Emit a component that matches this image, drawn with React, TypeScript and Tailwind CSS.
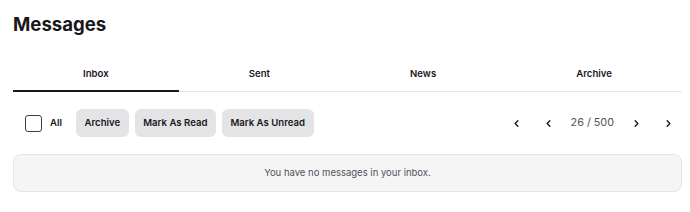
import { ChevronLeft, ChevronRight } from "lucide-react";
import { useState } from "react";

const TABS = ["Inbox", "Sent", "News", "Archive"];
const ACTIONS = ["Archive", "Mark As Read", "Mark As Unread"];

export default function App() {
  const [tab, setTab] = useState("Inbox");
  const [all, setAll] = useState(false);

  return (
    <div className="min-h-[212px] bg-white pl-[13px] pr-[8px] pt-[10px] font-['Inter',sans-serif] text-[#18181b]">
      <h1 className="text-[18.6px] font-bold leading-[28px]">Messages</h1>

      <div className="mt-[18px] flex border-b border-[#e5e7eb]">
        {TABS.map((t) => (
          <button
            key={t}
            type="button"
            onClick={() => setTab(t)}
            className={`flex-auto -mb-px pt-[10px] pb-[8px] text-[9.6px] font-semibold leading-[16px] ${
              tab === t ? "border-b-2 border-[#18181b]" : "border-b-2 border-transparent"
            }`}
          >
            {t}
          </button>
        ))}
      </div>

      <div className="mt-[17px] flex items-center">
        <label className="ml-[12px] flex items-center gap-[8px] text-[9.6px] font-semibold">
          <button
            type="button"
            onClick={() => setAll(!all)}
            className="h-[17px] w-[17px] rounded-[3px] border-[1.5px] border-[#3f3f46] bg-white"
            aria-pressed={all}
          />
          All
        </label>
        <div className="ml-[14px] flex gap-[6px]">
          {ACTIONS.map((a) => (
            <button
              key={a}
              type="button"
              className="h-[28px] rounded-[6px] bg-[#e4e4e7] px-[8.5px] text-[9.6px] font-semibold leading-[16px]"
            >
              {a}
            </button>
          ))}
        </div>
        <div className="ml-auto -mr-[2px] flex items-center">
          <button type="button" className="flex h-7 w-8 items-center justify-center">
            <ChevronLeft className="h-[11px] w-[11px]" strokeWidth={3} />
          </button>
          <button type="button" className="flex h-7 w-8 items-center justify-center">
            <ChevronLeft className="h-[11px] w-[11px]" strokeWidth={3} />
          </button>
          <span className="px-[6px] text-[10.8px] text-[#52525b]">26 / 500</span>
          <button type="button" className="flex h-7 w-8 items-center justify-center">
            <ChevronRight className="h-[11px] w-[11px]" strokeWidth={3} />
          </button>
          <button type="button" className="flex h-7 w-8 items-center justify-center">
            <ChevronRight className="h-[11px] w-[11px]" strokeWidth={3} />
          </button>
        </div>
      </div>

      <div className="mt-[17px] flex h-[38px] items-center justify-center rounded-[8px] border border-[#e5e5e5] bg-[#f5f5f5] text-[9.5px] text-[#52525b]">
        You have no messages in your inbox.
      </div>
    </div>
  );
}
